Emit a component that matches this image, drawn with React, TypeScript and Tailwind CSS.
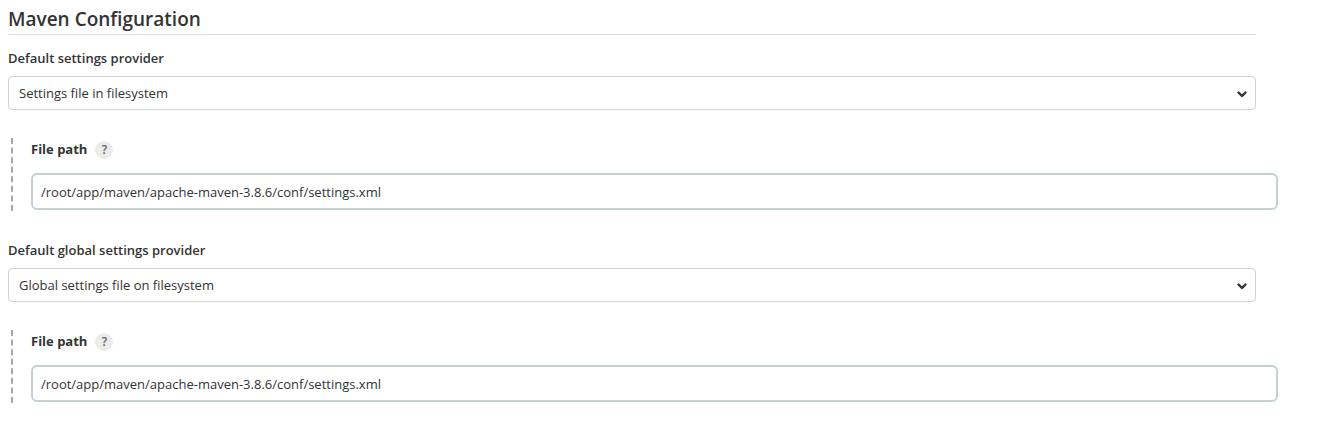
import React from "react";

const font = { fontFamily: '"Open Sans", "Noto Sans", sans-serif' };

function Chevron() {
  return (
    <svg width="10" height="7" viewBox="0 0 10 7" className="shrink-0">
      <path d="M1.5 1.5 L5 5 L8.5 1.5" fill="none" stroke="#333" strokeWidth="2.4" strokeLinecap="round" strokeLinejoin="round" />
    </svg>
  );
}

function SelectBox({ value }: { value: string }) {
  return (
    <div className="flex items-center justify-between h-[34px] w-[1248px] border border-[#cdd3d8] rounded-[4px] pl-[10px] pr-[8px] pt-[2px] text-[13px] text-[#333] bg-white">
      <span>{value}</span>
      <Chevron />
    </div>
  );
}

function FilePath({ path }: { path: string }) {
  return (
    <div className="ml-[3px] border-l-2 border-dashed border-[#a8a8a8] pl-[18px] pt-[3px] pb-[1px]">
      <div className="flex items-center gap-[8px] h-[18px] text-[13px] font-bold text-[#333]">
        File path
        <span className="flex items-center justify-center w-[18px] h-[18px] rounded-full bg-[#ebebeb] text-[12px] text-[#666] font-semibold">?</span>
      </div>
      <div className="mt-[14px] flex items-center h-[37px] w-[1247px] border-2 border-[#c6d0d2] rounded-[6px] pl-[8px] pt-[2px] text-[13px] text-[#333] bg-white">
        {path}
      </div>
    </div>
  );
}

export default function App() {
  return (
    <div className="min-h-screen bg-white px-[8px]" style={font}>
      <div className="w-[1248px] pt-[7px] pb-[3px] border-b border-[#dcdcdc]">
        <h2 className="text-[19px] leading-[24px] font-semibold text-[#333]">Maven Configuration</h2>
      </div>

      <div className="mt-[14px] text-[13px] leading-[18px] font-semibold text-[#333]">Default settings provider</div>
      <div className="mt-[9px]">
        <SelectBox value="Settings file in filesystem" />
      </div>
      <div className="mt-[28px]">
        <FilePath path="/root/app/maven/apache-maven-3.8.6/conf/settings.xml" />
      </div>

      <div className="mt-[30px] text-[13px] leading-[18px] font-semibold text-[#333]">Default global settings provider</div>
      <div className="mt-[9px]">
        <SelectBox value="Global settings file on filesystem" />
      </div>
      <div className="mt-[28px]">
        <FilePath path="/root/app/maven/apache-maven-3.8.6/conf/settings.xml" />
      </div>
    </div>
  );
}
